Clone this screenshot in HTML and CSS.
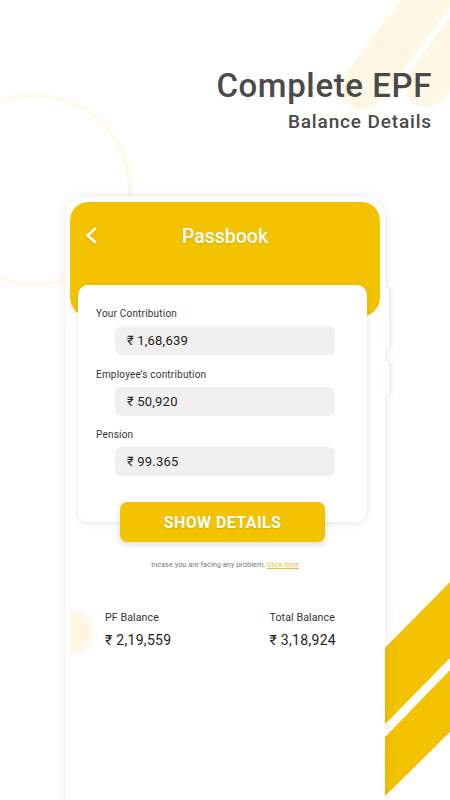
FILE: index.html
```html
<!DOCTYPE html>
<html lang="en">
<head>
<meta charset="utf-8">
<title>Passbook</title>
<link rel="stylesheet" href="styles.css">
</head>
<body>
<div class="page">
  <svg class="decor" width="450" height="800" viewBox="0 0 450 800" aria-hidden="true">
    <defs>
      <filter id="glow" x="-20%" y="-20%" width="140%" height="140%">
        <feGaussianBlur stdDeviation="2.5"/>
      </filter>
    </defs>
    <circle cx="35" cy="190" r="93" fill="none" stroke="#fcf3d4" stroke-width="4" filter="url(#glow)"/>
    <circle cx="35" cy="190" r="93" fill="#ffffff"/>
    <line x1="500" y1="-96" x2="362" y2="88" stroke="#fdf7e4" stroke-width="44" stroke-linecap="round"/>
    <line x1="540" y1="-66" x2="427" y2="85" stroke="#fdf7e4" stroke-width="44" stroke-linecap="round"/>
    <polygon points="300,734 450,582 450,658 300,811" fill="#f3c300"/>
    <polygon points="300,825 450,670 450,732 300,880" fill="#f3c300"/>
  </svg>

  <header class="hero">
    <h1 class="hero-title">Complete EPF</h1>
    <h2 class="hero-sub">Balance Details</h2>
  </header>

  <div class="phone">
    <span class="side-btn side-btn-1"></span>
    <span class="side-btn side-btn-2"></span>
    <div class="screen">
      <div class="appbar">
        <svg class="back" width="40" height="24" viewBox="0 0 40 24" aria-hidden="true">
          <path d="M25 5 L17.5 11.5 L25 18" fill="none" stroke="#ffffff" stroke-width="2.6" stroke-linecap="round" stroke-linejoin="round"/>
        </svg>
        <h3 class="appbar-title">Passbook</h3>
        <span></span>
      </div>

      <div class="card">
        <div class="field">
          <div class="field-label">Your Contribution</div>
          <div class="field-value">₹ 1,68,639</div>
        </div>
        <div class="field">
          <div class="field-label">Employee’s contribution</div>
          <div class="field-value">₹ 50,920</div>
        </div>
        <div class="field">
          <div class="field-label">Pension</div>
          <div class="field-value">₹ 99.365</div>
        </div>
      </div>

      <button class="show-btn">SHOW DETAILS</button>

      <p class="help">Incase you are facing any problem, <a class="help-link">Click here</a></p>

      <div class="balances">
        <span class="blob"></span>
        <div class="bal">
          <div class="bal-label">PF Balance</div>
          <div class="bal-value">₹ 2,19,559</div>
        </div>
        <div class="bal">
          <div class="bal-label">Total Balance</div>
          <div class="bal-value">₹ 3,18,924</div>
        </div>
      </div>
    </div>
  </div>
</div>
</body>
</html>
```

FILE: styles.css
```css
* { box-sizing: border-box; }

html, body {
  margin: 0;
  padding: 0;
  background: #ffffff;
}

body {
  font-family: Roboto, "Noto Sans", "DejaVu Sans", sans-serif;
  color: #222;
}

.page {
  position: relative;
  width: 450px;
  height: 800px;
  overflow: hidden;
  background: #ffffff;
}

.decor {
  position: absolute;
  left: 0;
  top: 0;
  z-index: 0;
}

.hero {
  position: relative;
  z-index: 1;
  padding: 66px 18px 0 0;
  text-align: right;
}

.hero-title {
  margin: 0;
  font-size: 33px;
  line-height: 40px;
  font-weight: 500;
  color: #4a4a4a;
  letter-spacing: 0.6px;
}

.hero-sub {
  margin: 3px 0 0;
  font-size: 19px;
  line-height: 26px;
  font-weight: 500;
  color: #4a4a4a;
  letter-spacing: 0.85px;
}

.phone {
  position: relative;
  z-index: 2;
  margin: 62px 0 0 65px;
  width: 320px;
  height: 700px;
  padding: 5px 5px 0;
  background: #ffffff;
  border-radius: 22px 22px 0 0;
  box-shadow: 0 0 14px rgba(0, 0, 0, 0.09);
}

.side-btn {
  position: absolute;
  right: -4px;
  width: 5px;
  background: #ffffff;
  border-radius: 0 3px 3px 0;
  box-shadow: 2px 0 4px rgba(0, 0, 0, 0.08);
}

.side-btn-1 { top: 91px; height: 61px; }
.side-btn-2 { top: 164px; height: 34px; }

.screen {
  position: relative;
  height: 100%;
  background: #ffffff;
  border-radius: 18px 18px 0 0;
  overflow: hidden;
}

.appbar {
  display: grid;
  grid-template-columns: 40px 1fr 40px;
  align-items: start;
  height: 115px;
  padding-top: 23px;
  background: #f3c300;
  border-radius: 18px 18px 20px 20px;
}

.back {
  display: block;
  margin-top: -1px;
  filter: drop-shadow(0 1px 1px rgba(0, 0, 0, 0.12));
}

.appbar-title {
  margin: 0;
  text-align: center;
  font-size: 19.5px;
  line-height: 24px;
  font-weight: 500;
  color: #ffffff;
  text-shadow: 0 1px 2px rgba(0, 0, 0, 0.12);
}

.card {
  position: relative;
  margin: -32px 0 0 8px;
  width: 289px;
  height: 237px;
  padding: 22px 0 0 18px;
  background: #ffffff;
  border-radius: 10px;
  box-shadow: 0 2px 8px rgba(0, 0, 0, 0.09);
  display: flex;
  flex-direction: column;
  gap: 12.6px;
}

.field {
  display: flex;
  flex-direction: column;
  gap: 6px;
}

.field-label {
  font-size: 10px;
  line-height: 13px;
  color: #333333;
  letter-spacing: 0.2px;
}

.field-value {
  margin-left: 19px;
  width: 220px;
  height: 29px;
  padding-left: 12px;
  background: #f0f0f0;
  border-radius: 6px;
  font-size: 13px;
  line-height: 29px;
  color: #222222;
  letter-spacing: 0.2px;
}

.show-btn {
  position: relative;
  display: block;
  margin: -20px 0 0 50px;
  width: 205px;
  height: 40px;
  padding: 0;
  border: 0;
  border-radius: 7px;
  background: #f3c300;
  color: #ffffff;
  font-family: Roboto, "Noto Sans", sans-serif;
  font-size: 16px;
  font-weight: 700;
  letter-spacing: 0.4px;
  text-shadow: 0 1px 2px rgba(0, 0, 0, 0.12);
  box-shadow: 0 3px 6px rgba(0, 0, 0, 0.14);
}

.help {
  margin: 18px 0 0;
  text-align: center;
  font-size: 7.4px;
  line-height: 10px;
  color: #7a7a7a;
}

.help-link {
  color: #f2b632;
  text-decoration: underline;
}

.balances {
  position: relative;
  display: flex;
  justify-content: space-between;
  margin-top: 41px;
  padding: 0 44px 0 35px;
}

.blob {
  position: absolute;
  left: -22px;
  top: -1px;
  width: 45px;
  height: 44px;
  border-radius: 50%;
  background: #fdf7e3;
}

.bal {
  position: relative;
  display: flex;
  flex-direction: column;
  gap: 6px;
}

.bal-label {
  font-size: 10.6px;
  line-height: 14px;
  color: #333333;
  letter-spacing: 0.1px;
}

.bal-value {
  font-size: 14px;
  line-height: 18px;
  color: #1e1e1e;
  letter-spacing: 0.3px;
}
```
